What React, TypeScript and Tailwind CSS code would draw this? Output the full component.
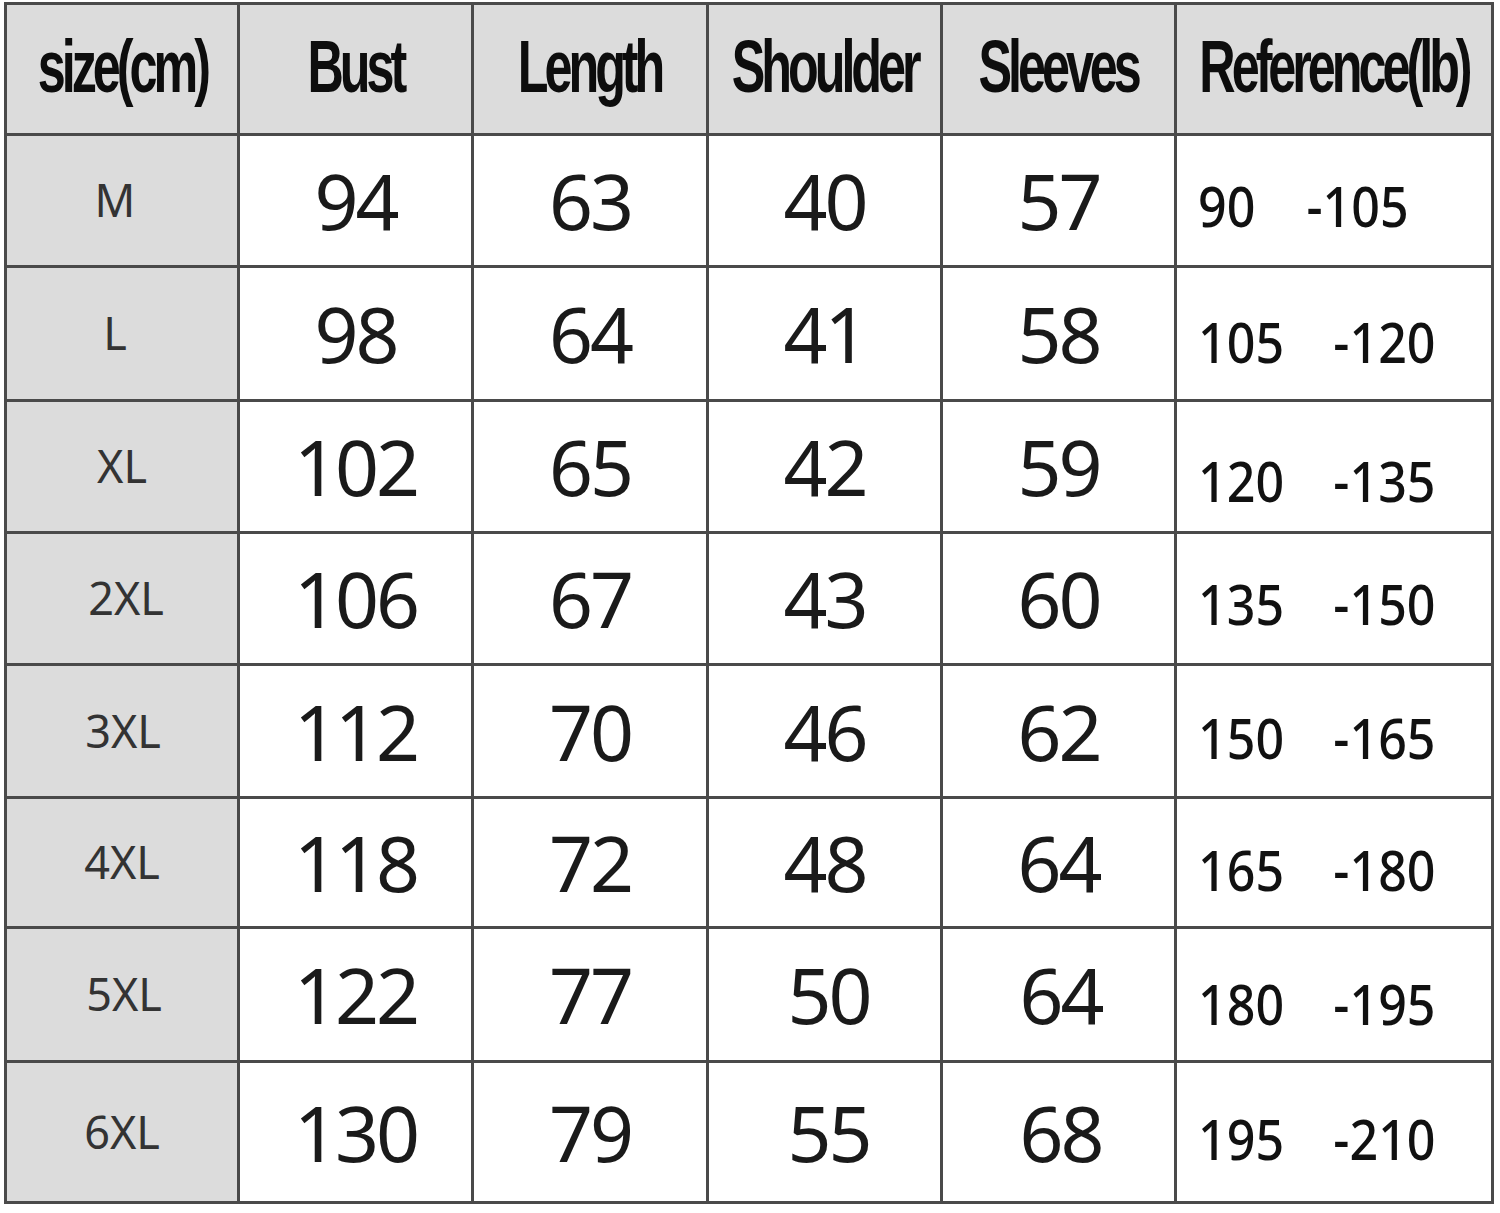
const headers = ["size(cm)", "Bust", "Length", "Shoulder", "Sleeves", "Reference(lb)"];

const rows = [
  { size: "M", vals: ["94", "63", "40", "57"], lb: ["90", "-105"], dy: "pt-[10px]", sx: "pr-[14px]" },
  { size: "L", vals: ["98", "64", "41", "58"], lb: ["105", "-120"], dy: "pt-[16px]", sx: "pr-[14px]" },
  { size: "XL", vals: ["102", "65", "42", "59"], lb: ["120", "-135"], dy: "pt-[28px]", sx: "" },
  { size: "2XL", vals: ["106", "67", "43", "60"], lb: ["135", "-150"], dy: "pt-[10px]", sx: "pl-[8px]" },
  { size: "3XL", vals: ["112", "70", "46", "62"], lb: ["150", "-165"], dy: "pt-[12px]", sx: "pl-[2px]" },
  { size: "4XL", vals: ["118", "72", "48", "64"], lb: ["165", "-180"], dy: "pt-[14px]", sx: "" },
  { size: "5XL", vals: ["122", "77", "50", "64"], lb: ["180", "-195"], dy: "pt-[18px]", sx: "pl-[4px]" },
  { size: "6XL", vals: ["130", "79", "55", "68"], lb: ["195", "-210"], dy: "pt-[12px]", sx: "" },
];

// small nudges where the original chart is off-centre
const nudge: Record<string, string> = {
  "6-2": "pl-[8px]",
  "6-3": "pl-[4px]",
  "7-2": "pl-[8px]",
  "7-3": "pl-[4px]",
};

export default function App() {
  return (
    <div className="min-h-screen bg-white pt-[2px] pl-[4px]">
      <div className="w-fit bg-[#4a4a4a] p-[3px]">
        <div className="grid grid-cols-[230px_231px_232px_231px_231px_314px] grid-rows-[128px_129px_131px_129px_129px_130px_127px_131px_138px] gap-[3px]">
          {headers.map((h) => (
            <div
              key={h}
              className="flex items-center justify-center overflow-visible bg-[#dcdcdc] pb-[4px]"
            >
              <span className="inline-block scale-x-[0.68] whitespace-nowrap font-['Liberation_Sans',sans-serif] text-[74px] font-bold leading-none tracking-[-0.08em] text-[#0d0d0d]">
                {h}
              </span>
            </div>
          ))}

          {rows.map((r, ri) => (
            <Row key={r.size} r={r} ri={ri} />
          ))}
        </div>
      </div>
    </div>
  );
}

function Row({ r, ri }: { r: (typeof rows)[number]; ri: number }) {
  return (
    <>
      <div className={`flex items-center justify-center bg-[#dcdcdc] pb-[2px] ${r.sx}`}>
        <span className="font-['Noto_Sans',sans-serif] text-[45px] leading-none text-[#333]">
          {r.size}
        </span>
      </div>
      {r.vals.map((v, ci) => (
        <div
          key={ci}
          className={`flex items-center justify-center bg-white ${nudge[`${ri}-${ci}`] ?? ""}`}
        >
          <span className="font-['Noto_Sans',sans-serif] text-[77px] leading-none tracking-[-0.04em] text-[#1a1a1a]">
            {v}
          </span>
        </div>
      ))}
      <div className={`flex items-center bg-white pl-[21px] ${r.dy}`}>
        <span className="inline-block origin-left scale-x-[0.88] whitespace-nowrap font-['Noto_Sans',sans-serif] text-[57px] font-medium leading-none text-[#111]">
          <span className="inline-block">{r.lb[0]}</span>
          <span className={r.lb[0].length === 2 ? "ml-[58px]" : "ml-[56px]"}>{r.lb[1]}</span>
        </span>
      </div>
    </>
  );
}
